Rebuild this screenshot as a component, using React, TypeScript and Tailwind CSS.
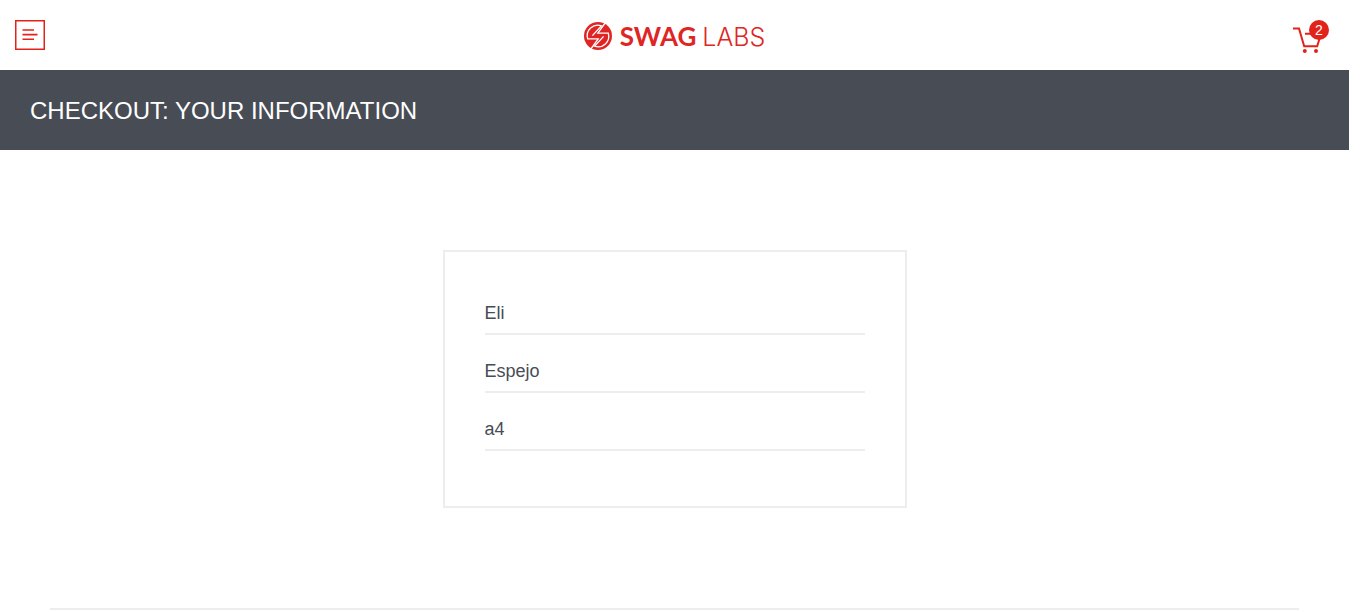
import { useState } from "react";

function MenuIcon() {
  return (
    <svg viewBox="0 0 30 30" className="size-[30px]" fill="none" stroke="#e2231a" aria-hidden="true">
      <rect x="0.75" y="0.75" width="28.5" height="28.5" strokeWidth="1.5" />
      <path d="M7.5 10H19M7.5 14.6H22.5M7.5 19.2H19" strokeWidth="1.6" />
    </svg>
  );
}

function LogoMark() {
  return (
    <svg viewBox="0 0 28 28" className="size-7" aria-hidden="true">
      <circle cx="14" cy="14" r="14" fill="#e02525" />
      <g fill="none" stroke="#fff" strokeWidth="1.3">
        <path d="M21.5 0.5L13.8 11.2H24.3A10.6 10.6 0 0 1 10.5 24.2L19.6 14.4" />
        <path d="M6.5 27.5L14.2 16.8H3.7A10.6 10.6 0 0 1 17.5 3.8L8.4 13.6" />
      </g>
    </svg>
  );
}

function CartIcon() {
  return (
    <svg viewBox="0 0 30 28" className="h-7 w-[30px]" fill="none" stroke="#e2231a" aria-hidden="true">
      <path d="M0 1.5H6L11.2 19.2H24.2L28 6.7H12" strokeWidth="2" />
      <circle cx="11.8" cy="24" r="2" fill="#e2231a" stroke="none" />
      <circle cx="23" cy="24" r="2" fill="#e2231a" stroke="none" />
    </svg>
  );
}

const fields = [
  { id: "first-name", label: "First Name", initial: "Eli" },
  { id: "last-name", label: "Last Name", initial: "Espejo" },
  { id: "postal-code", label: "Zip/Postal Code", initial: "a4" },
];

export default function App() {
  const [values, setValues] = useState<Record<string, string>>(
    Object.fromEntries(fields.map((f) => [f.id, f.initial])),
  );

  return (
    <div className="bg-white pr-[17px] font-['Liberation_Sans',Arial,sans-serif] text-[#484c55]">
      <header className="grid h-[70px] grid-cols-[1fr_auto_1fr] items-center px-[15px]">
        <button type="button" aria-label="Open Menu" className="justify-self-start">
          <MenuIcon />
        </button>
        <div className="flex items-center gap-2 pt-0.5 text-[#e02525]">
          <LogoMark />
          <span className="flex items-baseline gap-1.5 leading-7">
            <span className="font-[Lato,sans-serif] text-[26px] font-bold">SWAG</span>
            <span className="font-[Inter,sans-serif] text-[25px] font-light">LABS</span>
          </span>
        </div>
        <a href="#cart" aria-label="Shopping cart, 2 items" className="relative mr-[5px] justify-self-end pt-3 pr-1.5">
          <CartIcon />
          <span className="absolute top-[5px] right-0 flex size-5 items-center justify-center rounded-full bg-[#e2231a] text-sm text-white">
            2
          </span>
        </a>
      </header>

      <div className="flex h-20 items-center bg-[#484c55] px-[30px] pt-0.5">
        <h1 className="text-2xl text-white uppercase">Checkout: Your Information</h1>
      </div>

      <main className="px-[50px] pt-[100px]">
        <form className="mx-auto w-full max-w-[464px] border-2 border-[#ededed] px-10 pt-10 pb-[55px]">
          <div className="flex flex-col gap-[15px]">
            {fields.map((f) => (
              <input
                key={f.id}
                id={f.id}
                type="text"
                aria-label={f.label}
                placeholder={f.label}
                value={values[f.id]}
                onChange={(e) => setValues({ ...values, [f.id]: e.target.value })}
                className="block h-[43px] w-full border-b-2 border-[#ededed] bg-transparent pt-0.5 text-lg outline-none"
              />
            ))}
          </div>
        </form>
        <hr className="mt-[100px] mb-0.5 border-t-2 border-[#ededed]" />
      </main>
    </div>
  );
}
